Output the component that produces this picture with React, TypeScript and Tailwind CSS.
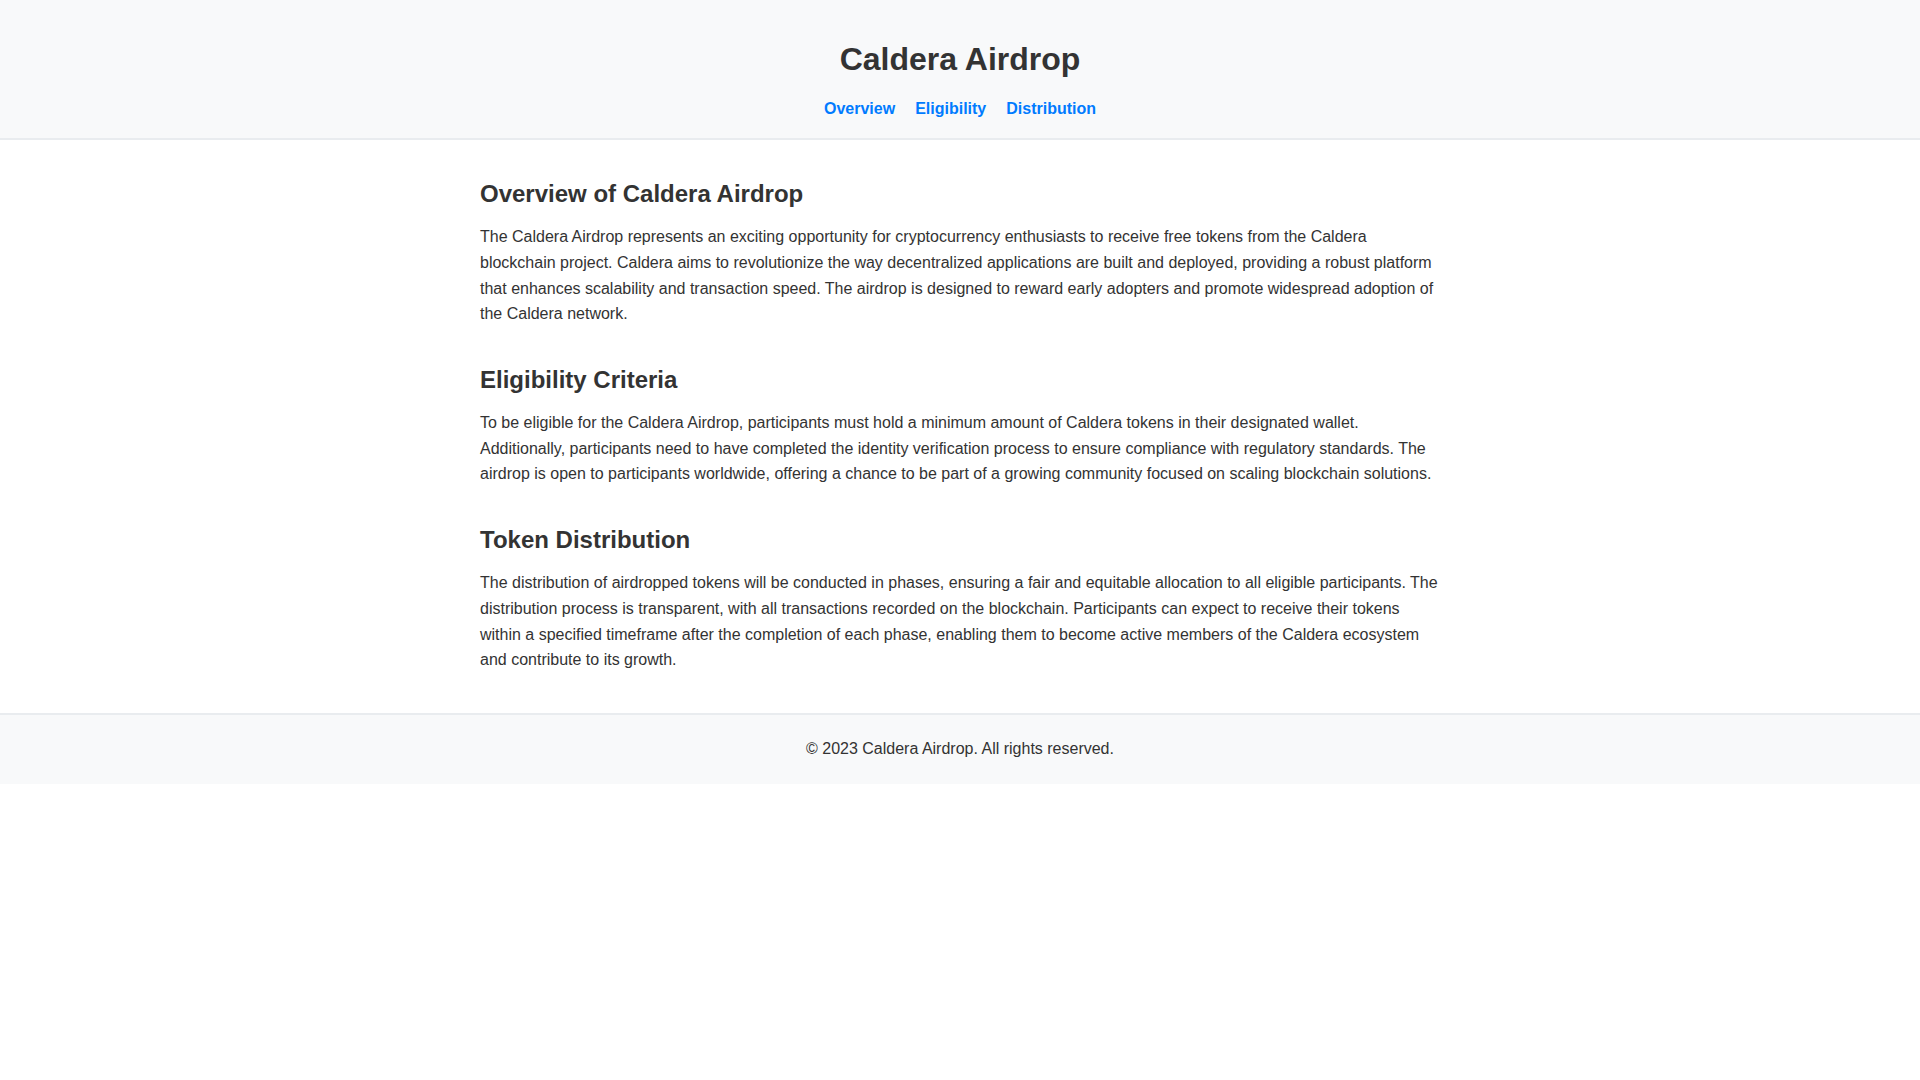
const sections = [
  {
    id: "overview",
    title: "Overview of Caldera Airdrop",
    body: "The Caldera Airdrop represents an exciting opportunity for cryptocurrency enthusiasts to receive free tokens from the Caldera blockchain project. Caldera aims to revolutionize the way decentralized applications are built and deployed, providing a robust platform that enhances scalability and transaction speed. The airdrop is designed to reward early adopters and promote widespread adoption of the Caldera network.",
  },
  {
    id: "eligibility",
    title: "Eligibility Criteria",
    body: "To be eligible for the Caldera Airdrop, participants must hold a minimum amount of Caldera tokens in their designated wallet. Additionally, participants need to have completed the identity verification process to ensure compliance with regulatory standards. The airdrop is open to participants worldwide, offering a chance to be part of a growing community focused on scaling blockchain solutions.",
  },
  {
    id: "distribution",
    title: "Token Distribution",
    body: "The distribution of airdropped tokens will be conducted in phases, ensuring a fair and equitable allocation to all eligible participants. The distribution process is transparent, with all transactions recorded on the blockchain. Participants can expect to receive their tokens within a specified timeframe after the completion of each phase, enabling them to become active members of the Caldera ecosystem and contribute to its growth.",
  },
];

const links = [
  { href: "#overview", label: "Overview" },
  { href: "#eligibility", label: "Eligibility" },
  { href: "#distribution", label: "Distribution" },
];

export default function App() {
  return (
    <div className="bg-white text-[#333] font-['Liberation_Sans',Arial,sans-serif]">
      <header className="bg-[#f8f9fa] border-b-2 border-[#e9ecef] pt-[39px] pb-[17px] text-center">
        <h1 className="text-[32px] leading-[40px] font-bold">Caldera Airdrop</h1>
        <nav className="mt-[18px] flex justify-center gap-5">
          {links.map((l) => (
            <a
              key={l.href}
              href={l.href}
              className="text-[16px] leading-[24px] font-bold text-[#007bff]"
            >
              {l.label}
            </a>
          ))}
        </nav>
      </header>

      <main className="max-w-[960px] mx-auto pt-[35px] pb-[40px] flex flex-col gap-[34px]">
        {sections.map((s) => (
          <section key={s.id} id={s.id}>
            <h2 className="text-[24px] leading-[38.4px] font-bold mb-[11px]">
              {s.title}
            </h2>
            <p className="text-[16px] leading-[25.6px]">{s.body}</p>
          </section>
        ))}
      </main>

      <footer className="bg-[#f8f9fa] border-t-2 border-[#e9ecef] py-[21.7px] text-center text-[16px] leading-[25.6px]">
        © 2023 Caldera Airdrop. All rights reserved.
      </footer>
    </div>
  );
}
